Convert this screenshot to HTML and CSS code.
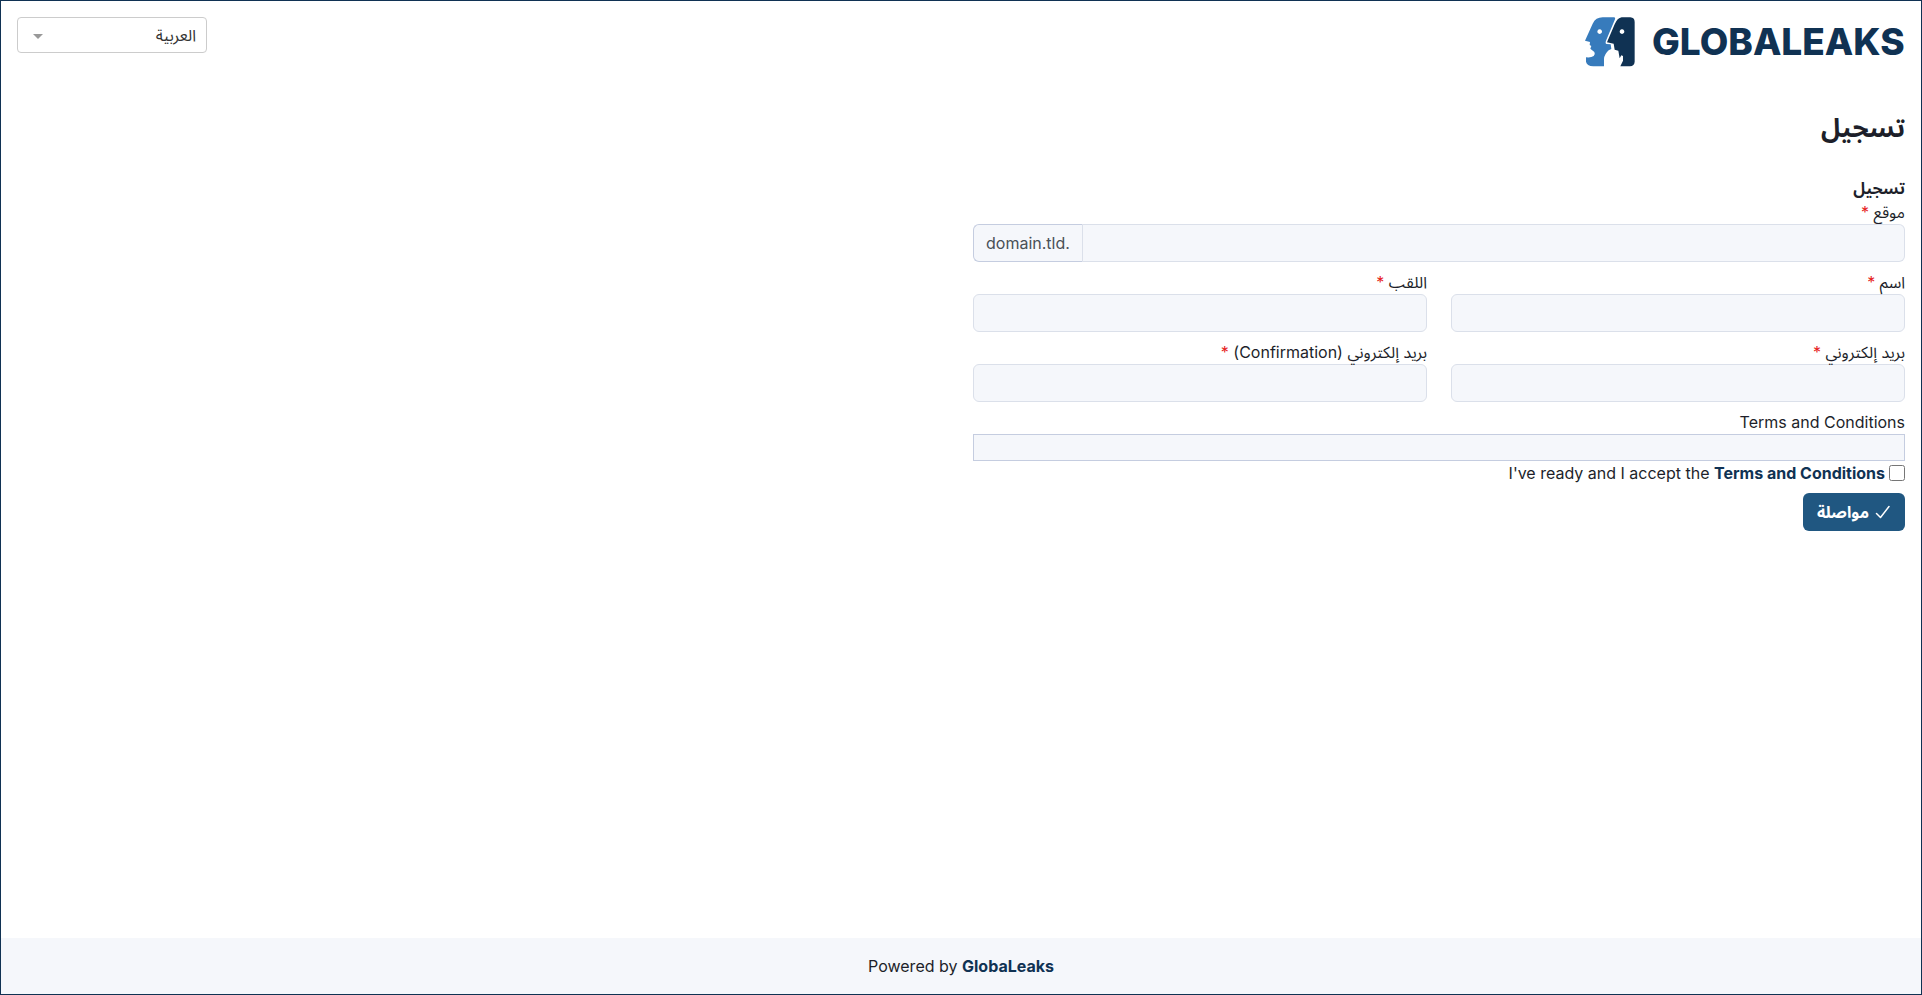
FILE: index.html
```html
<!DOCTYPE html>
<html lang="ar" dir="rtl">
<head>
<meta charset="utf-8">
<meta name="viewport" content="width=device-width, initial-scale=1">
<title>GlobaLeaks</title>
<link rel="stylesheet" href="styles.css">
</head>
<body class="page">
<header class="header">
  <a class="logo" href="#" aria-label="GlobaLeaks">
    <svg class="logo-image" viewBox="0 0 320 50" role="img" aria-label="GlobaLeaks">
      <g transform="scale(.3333) translate(-45 -50)">
        <path fill="#377bbc" fill-rule="evenodd" d="M98 51H133Q137 52 135 57L108 121Q105 130 110 131L122 132L124 146L116 150Q103 162 102 176V198H70Q50 196 48 184V171Q63 173 71 167Q77 162 73 155L61 145L64 137L59 134L60 125L45 121L68 70Q77 51 98 51ZM89 87a7 7 0 1 0 .1 0Z"/>
        <path fill="#103253" fill-rule="evenodd" d="M155 51H181Q194 52 194 65V184Q193 197 180 198H151L159 181V167L154 165L149 174L145 151L134 148L131 130L111 126L134 72Q142 53 155 51ZM156 87a7 7 0 1 0 .1 0Z"/>
      </g>
      <text class="logo-text" x="67" y="38" direction="ltr">GLOBALEAKS</text>
    </svg>
  </a>
  <div class="language">
    <select class="language-select" aria-label="اللغة"><option>العربية</option></select>
  </div>
</header>
<main class="main">
  <h1 class="title">تسجيل</h1>
  <form class="form">
    <h2 class="subtitle">تسجيل</h2>
    <div class="field">
      <label class="label" for="site">موقع <span class="required">*</span></label>
      <div class="input-group">
        <input class="input" id="site" type="text">
        <span class="addon">.domain.tld</span>
      </div>
    </div>
    <div class="row">
      <div class="field">
        <label class="label" for="name">اسم <span class="required">*</span></label>
        <input class="input" id="name" type="text">
      </div>
      <div class="field">
        <label class="label" for="surname">اللقب <span class="required">*</span></label>
        <input class="input" id="surname" type="text">
      </div>
    </div>
    <div class="row">
      <div class="field">
        <label class="label" for="email">بريد إلكتروني <span class="required">*</span></label>
        <input class="input" id="email" type="email">
      </div>
      <div class="field">
        <label class="label" for="email2">بريد إلكتروني (Confirmation) <span class="required">*</span></label>
        <input class="input" id="email2" type="email">
      </div>
    </div>
    <div class="terms">
      <div class="label">Terms and Conditions</div>
      <div class="terms-box"></div>
      <div class="accept">
        <input class="checkbox" id="accept" type="checkbox">
        <label for="accept">I've ready and I accept the <a class="link" href="#">Terms and Conditions</a></label>
      </div>
    </div>
    <button class="button" type="button">
      <svg class="check" viewBox="0 0 16 16" aria-hidden="true"><path d="M1.500 9.500L5.500 13.500L14 2.500" fill="none" stroke="currentColor" stroke-width="1.500" stroke-linecap="round" stroke-linejoin="round"/></svg>
      <span>مواصلة</span>
    </button>
  </form>
</main>
<footer class="footer"><span dir="ltr">Powered by <a class="link" href="#">GlobaLeaks</a></span></footer>
</body>
</html>
```
FILE: styles.css
```css
* {
  box-sizing: border-box;
}

.page {
  display: flex;
  flex-direction: column;
  min-height: 100vh;
  margin: 0;
  border: 1px solid #103253;
  background: #fff;
  color: #1d1f2a;
  font: 16px/24px Inter, "Noto Sans Arabic", Vazirmatn, sans-serif;
}

.header {
  display: flex;
  align-items: flex-start;
  justify-content: space-between;
  padding: 16px;
}

.logo {
  display: block;
  color: #103253;
}

.logo-image {
  display: block;
  width: 320px;
  height: 50px;
}

.logo-text {
  fill: #103253;
  font: 800 37px Inter, sans-serif;
}

.language {
  position: relative;
  width: 190px;
}

.language::after {
  content: "";
  position: absolute;
  top: 17px;
  left: 16px;
  border: 5px solid transparent;
  border-top-color: #999;
  border-bottom: 0;
  pointer-events: none;
}

.language-select {
  display: block;
  width: 100%;
  height: 36px;
  padding: 0 10px;
  border: 1px solid #ccc;
  border-radius: 4px;
  appearance: none;
  background: #fff;
  color: #333;
  font: inherit;
}

.main {
  flex: 1;
  padding: 16px;
}

.title {
  margin: 12px 0 31px;
  font-size: 26px;
  line-height: 34px;
  font-weight: 700;
}

.form {
  width: calc(50% - 12px);
}

.subtitle {
  margin: 0;
  font-size: 16px;
  line-height: 24px;
  font-weight: 700;
}

.field {
  flex: 1;
  min-width: 0;
  margin-bottom: 8px;
}

.row {
  display: flex;
  gap: 24px;
}

.label {
  display: block;
  height: 24px;
}

.required {
  color: #e62020;
}

.input {
  display: block;
  width: 100%;
  height: 38px;
  padding: 6px 12px;
  border: 1px solid #dbe0ea;
  border-radius: 6px;
  background: #f5f7fb;
  color: inherit;
  font: inherit;
}

.input-group {
  display: flex;
}

.input-group .input {
  flex: 1;
  border-left: 0;
  border-radius: 0 6px 6px 0;
}

.addon {
  padding: 6px 12px;
  border: 1px solid #c5cde0;
  border-right-color: #dbe0ea;
  border-radius: 6px 0 0 6px;
  background: #f5f7fb;
  color: #495057;
}

.terms {
  margin-bottom: 8px;
}

.terms-box {
  height: 27px;
  border: 1px solid #c5cde0;
  background: #f5f7fb;
}

.accept {
  display: flex;
  align-items: center;
  gap: 4px;
}

.checkbox {
  width: 16px;
  height: 16px;
  margin: 0;
}

.link {
  color: #103253;
  font-weight: 700;
  text-decoration: none;
}

.button {
  display: flex;
  align-items: center;
  gap: 6px;
  height: 38px;
  padding: 0 14px;
  border: 0;
  border-radius: 6px;
  background: #205781;
  color: #fff;
  font: inherit;
  font-weight: 700;
}

.check {
  width: 16px;
  height: 16px;
}

.footer {
  padding: 16px;
  background: #f5f7fb;
  text-align: center;
}
```
